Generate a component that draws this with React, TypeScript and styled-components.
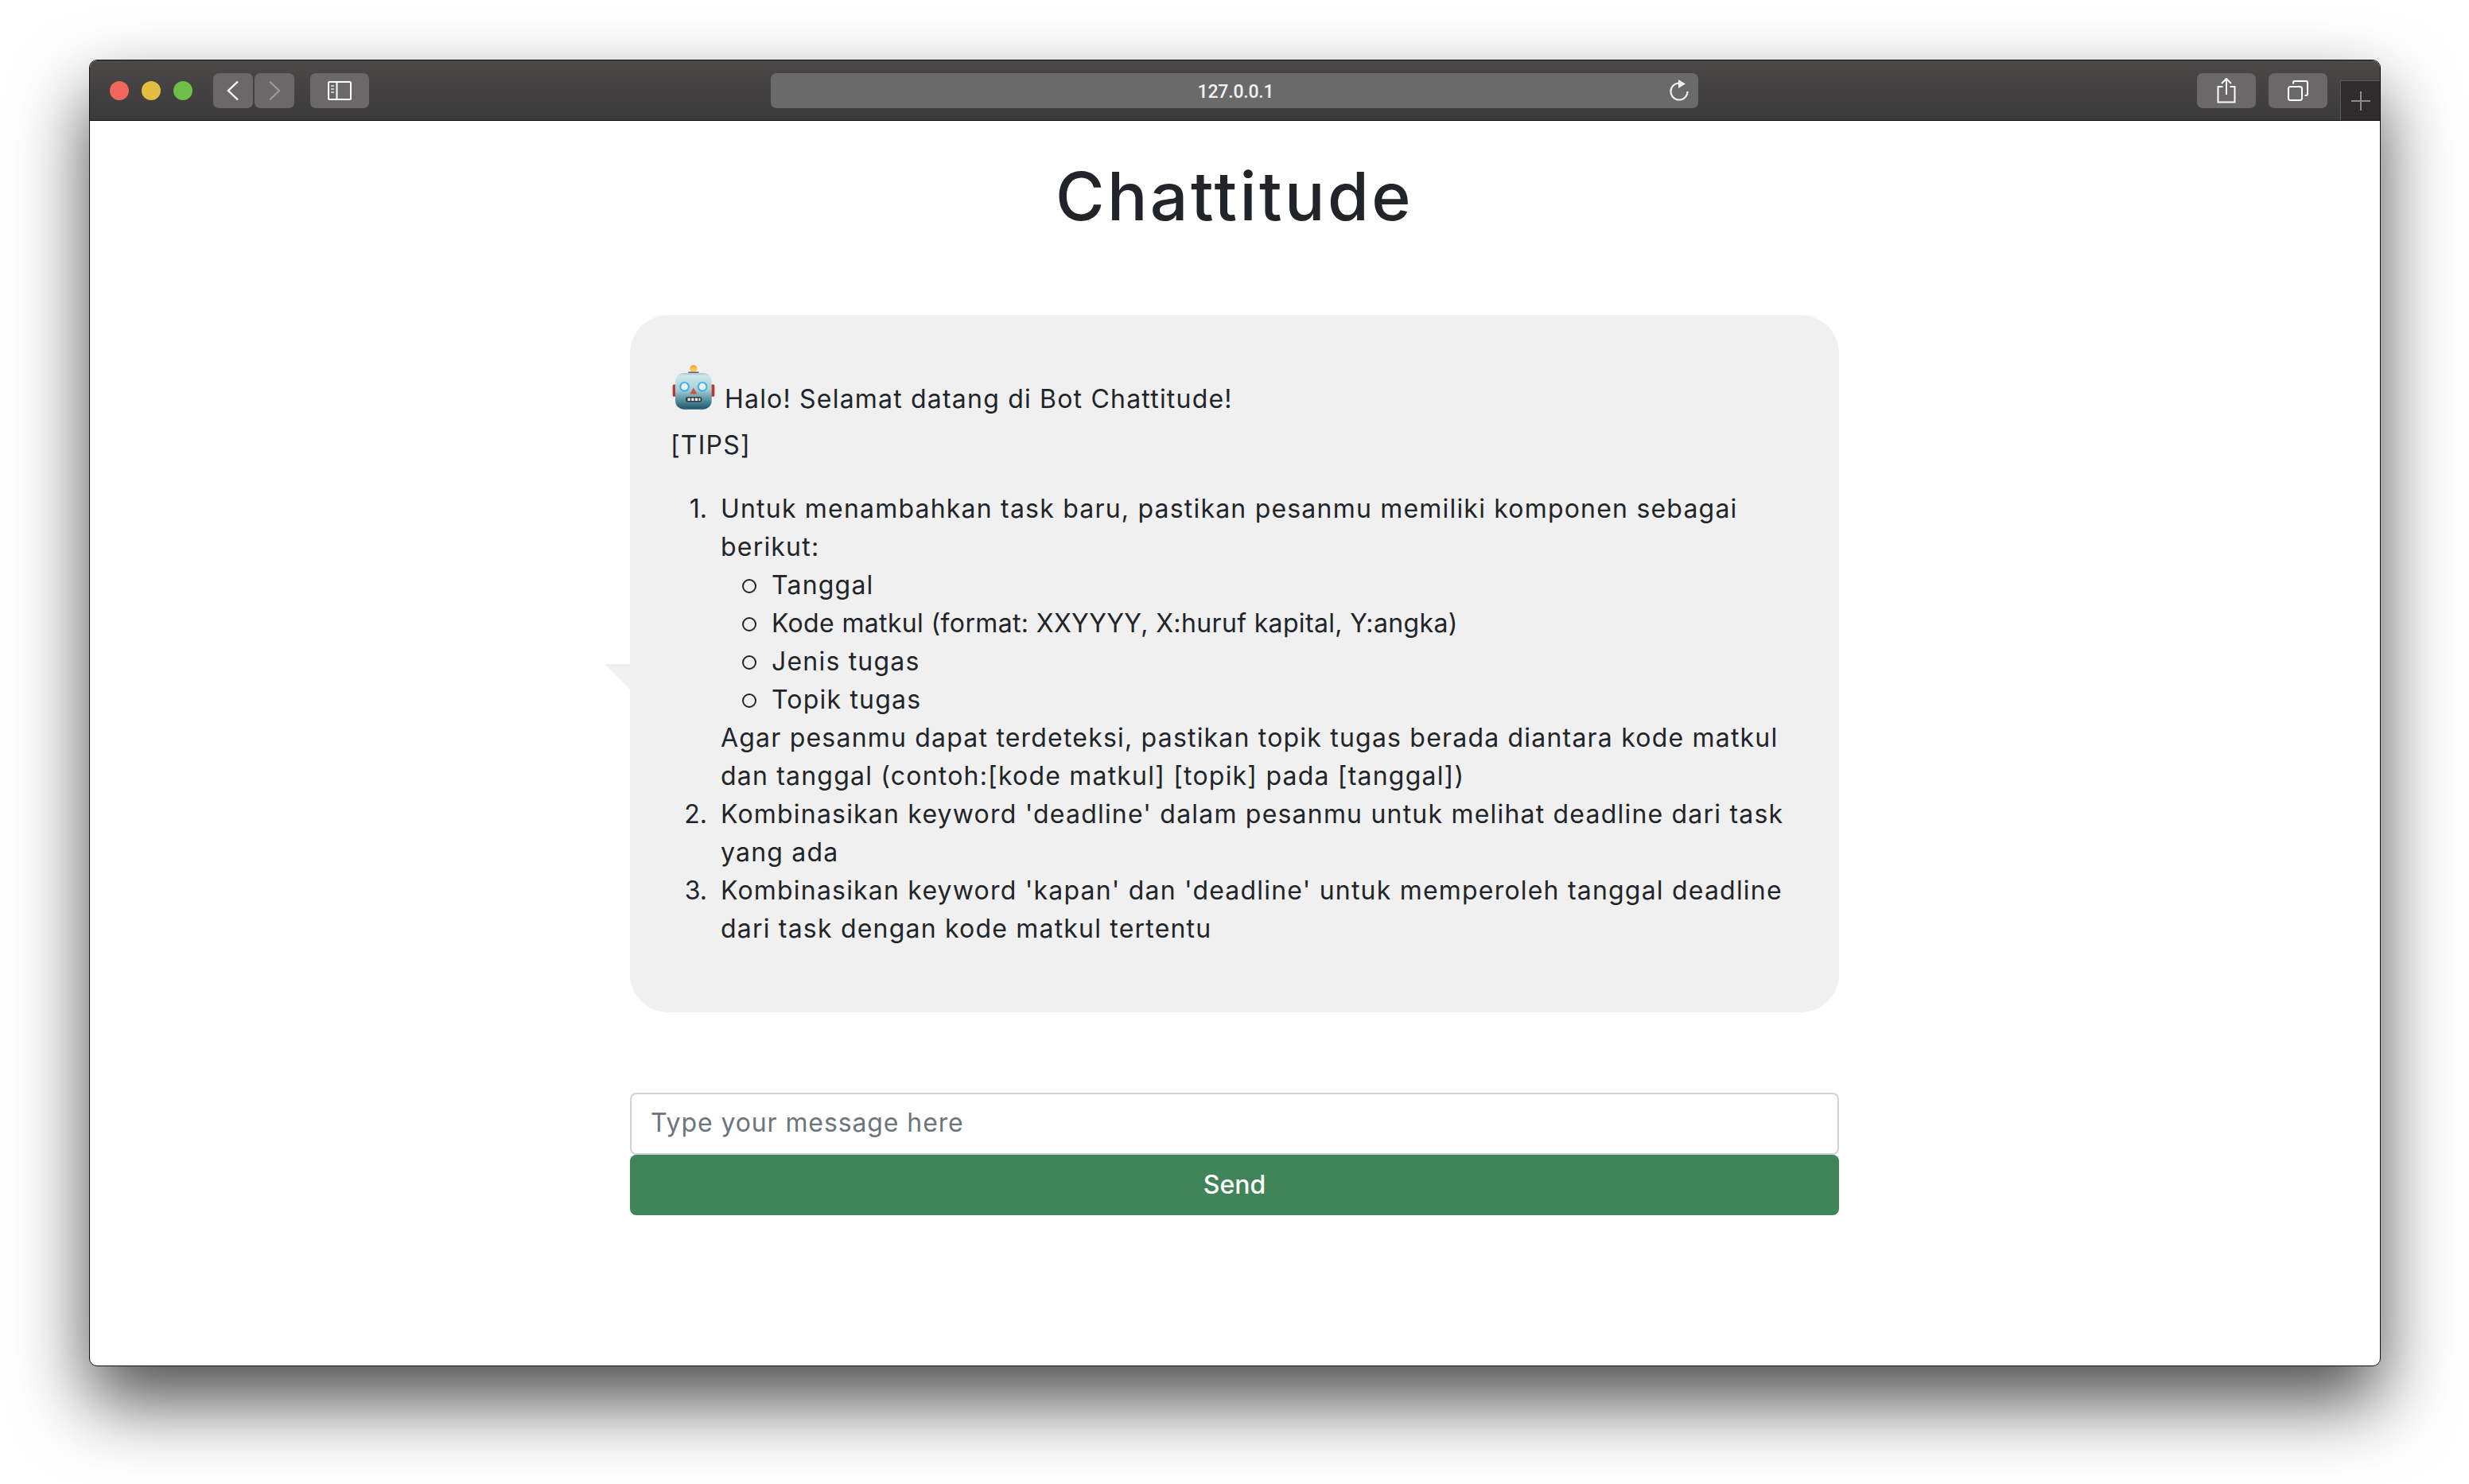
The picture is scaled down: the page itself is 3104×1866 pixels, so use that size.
import React from "react";
import styled, { createGlobalStyle } from "styled-components";

const GlobalStyle = createGlobalStyle`
  * { box-sizing: border-box; }
  html, body { margin: 0; padding: 0; background: #fff; }
  body { font-family: Inter, "Noto Sans", sans-serif; color: #212529; }
`;

const Stage = styled.div`
  width: 3104px;
  height: 1866px;
  padding: 75px 111px 148px 112px;
  overflow: hidden;
`;

const BrowserWindow = styled.div`
  height: 100%;
  display: flex;
  flex-direction: column;
  border: 1px solid #111;
  border-radius: 10px;
  background: #fff;
  box-shadow: 0 44px 92px 0 rgba(0, 0, 0, 0.7);
  overflow: hidden;
`;

const Toolbar = styled.header`
  flex: none;
  height: 76px;
  display: flex;
  align-items: flex-start;
  padding: 16px 0 0 25px;
  background: linear-gradient(#4b4948, #3b3a3a);
  border-bottom: 1px solid #111;
`;

const Lights = styled.div`
  display: flex;
  gap: 16px;
  margin-top: 10px;
  margin-right: 26px;
`;

const Light = styled.span<{ $color: string }>`
  width: 24px;
  height: 24px;
  border-radius: 50%;
  background: ${(p) => p.$color};
`;

const ToolGroup = styled.div`
  display: flex;
  gap: 2px;
`;

const ToolButton = styled.button<{ $wide?: boolean; $gap?: number }>`
  width: ${(p) => (p.$wide ? 74 : 50)}px;
  height: 44px;
  margin: 0 0 0 ${(p) => p.$gap ?? 0}px;
  padding: 0;
  display: flex;
  align-items: center;
  justify-content: center;
  border: none;
  border-radius: 7px;
  background: #6a6869;
`;

const AddressBar = styled.div`
  width: 1166px;
  height: 44px;
  margin-left: 505px;
  position: relative;
  display: flex;
  align-items: center;
  justify-content: center;
  padding: 2px 0 0 3px;
  border-radius: 7px;
  background: #6b6a6a;
  color: #f2f2f2;
  font-family: Roboto, sans-serif;
  font-size: 23px;
  font-weight: 500;
  letter-spacing: -0.2px;
`;

const Reload = styled.svg`
  position: absolute;
  right: 11px;
  top: 8px;
`;

const RightTools = styled.div`
  margin-left: auto;
  display: flex;
  gap: 16px;
`;

const NewTab = styled.div`
  align-self: flex-end;
  width: 50px;
  height: 50px;
  margin-left: 16px;
  display: flex;
  align-items: center;
  justify-content: center;
  background: #2e2c2c;
  border-top: 1px solid #5a5858;
  border-left: 1px solid #5a5858;
`;

const Page = styled.main`
  flex: 1;
  display: flex;
  flex-direction: column;
  align-items: center;
  padding-right: 1px;
`;

const Title = styled.h1`
  margin: 45px 0 98px;
  font-size: 84px;
  line-height: 1.2;
  font-weight: 500;
  letter-spacing: 3.4px;
  color: #212529;
`;

const Chat = styled.section`
  width: 1520px;
`;

const Bubble = styled.div`
  position: relative;
  padding: 63px 51px 49px;
  background: #f0f0f0;
  border-radius: 48px;
  font-size: 32px;
  line-height: 48px;
  letter-spacing: 1.2px;

  &::before {
    content: "";
    position: absolute;
    left: -32px;
    top: 439px;
    border-top: 32px solid #f0f0f0;
    border-left: 32px solid transparent;
  }
`;

const Greeting = styled.div`
  display: flex;
  align-items: flex-start;
  gap: 12px;
  height: 77px;
  padding-left: 2px;
`;

const GreetingText = styled.span`
  margin-top: 19px;
`;

const Tips = styled.div`
  margin-bottom: 32px;
`;

const Steps = styled.ol`
  margin: 0 0 32px;
  padding-left: 63px;
  list-style: none;
  counter-reset: step;
`;

const Step = styled.li`
  position: relative;
  counter-increment: step;

  &::before {
    content: counter(step) ".";
    position: absolute;
    right: 100%;
    margin-right: 17px;
    letter-spacing: 0;
  }
`;

const Parts = styled.ul`
  margin: 0;
  padding-left: 64px;
  list-style: none;
`;

const Part = styled.li<{ $tight?: boolean }>`
  position: relative;
  letter-spacing: ${(p) => (p.$tight ? 0.35 : 1.2)}px;

  &::before {
    content: "";
    position: absolute;
    left: -37px;
    top: 16px;
    width: 14px;
    height: 14px;
    border: 2px solid #212529;
    border-radius: 50%;
  }
`;

const Composer = styled.form`
  margin-top: 101px;
  display: flex;
  flex-direction: column;
`;

const MessageInput = styled.input`
  width: 100%;
  height: 78px;
  padding: 0 24px 2px;
  border: 2px solid #ced4da;
  border-radius: 8px;
  font: inherit;
  font-size: 32px;
  letter-spacing: 0.9px;
  color: #212529;

  &::placeholder {
    color: #6c757d;
    opacity: 1;
  }
`;

const SendButton = styled.button`
  height: 76px;
  padding-bottom: 2px;
  border: none;
  border-radius: 8px;
  background: #408558;
  color: #fff;
  font: inherit;
  font-size: 32px;
  font-weight: 500;
`;

const RobotEmoji = () => (
  <svg width="54" height="57" viewBox="195 208 163 172">
    <defs>
      <linearGradient id="head" x1="0" y1="0" x2="0" y2="1">
        <stop offset="0" stopColor="#aec6c6" />
        <stop offset="0.08" stopColor="#cde8ec" />
        <stop offset="0.45" stopColor="#a9cfd6" />
        <stop offset="0.72" stopColor="#5d96a4" />
        <stop offset="1" stopColor="#1d566a" />
      </linearGradient>
      <linearGradient id="bulb" x1="0" y1="0" x2="0" y2="1">
        <stop offset="0" stopColor="#f9a32b" />
        <stop offset="1" stopColor="#ffd27a" />
      </linearGradient>
    </defs>
    <rect x="197" y="282" width="16" height="46" rx="5" fill="#b8392f" />
    <rect x="340" y="282" width="16" height="46" rx="5" fill="#b8392f" />
    <circle cx="276" cy="222" r="14" fill="url(#bulb)" />
    <path d="M256 234 h40 c0 10 -8 15 -20 15 s-20 -5 -20 -15z" fill="#66547f" />
    <rect x="207" y="238" width="138" height="138" rx="32" fill="url(#head)" />
    <circle cx="242" cy="290" r="16" fill="#e6f1f4" stroke="#3fb0e6" strokeWidth="6" />
    <circle cx="310" cy="290" r="16" fill="#e6f1f4" stroke="#3fb0e6" strokeWidth="6" />
    <path d="M276 294 L262 318 H290Z" fill="#c85450" />
    <rect x="246" y="329" width="62" height="19" rx="9.5" fill="#2f3a40" />
    <path d="M254 333 h10 v11 h-10z M268 333 h10 v11 h-10z M282 333 h10 v11 h-10z M296 333 h6 v11 h-6z" fill="#e4e8e8" />
  </svg>
);

export default function App() {
  return (
    <Stage>
      <GlobalStyle />
      <BrowserWindow>
        <Toolbar>
          <Lights>
            <Light $color="#f2675c" />
            <Light $color="#e4bd45" />
            <Light $color="#6fbf46" />
          </Lights>
          <ToolGroup>
            <ToolButton aria-label="Back">
              <svg width="18" height="26" viewBox="0 0 18 26" fill="none" stroke="#fff" strokeWidth="2.4">
                <path d="M15 1.5 3 13l12 11.5" />
              </svg>
            </ToolButton>
            <ToolButton aria-label="Forward">
              <svg width="18" height="26" viewBox="0 0 18 26" fill="none" stroke="#989697" strokeWidth="2.4">
                <path d="M3 1.5 15 13 3 24.5" />
              </svg>
            </ToolButton>
          </ToolGroup>
          <ToolButton $wide $gap={20} aria-label="Sidebar">
            <svg width="30" height="24" viewBox="0 0 30 24" fill="none" stroke="#fff" strokeWidth="2">
              <rect x="1" y="1" width="28" height="22" rx="1.5" />
              <path d="M11.5 1v22" />
              <path d="M4 6h4M4 10h4M4 14h4" stroke="#c9c8c8" strokeWidth="2" />
            </svg>
          </ToolButton>
          <AddressBar>
            127.0.0.1
            <Reload width="26" height="28" viewBox="0 0 26 28" fill="none">
              <path d="M13 4.5A10.5 10.5 0 1 0 23.5 15" stroke="#eee" strokeWidth="2.2" />
              <path d="M12 0l9 5.5-9 5.5z" fill="#eee" />
            </Reload>
          </AddressBar>
          <RightTools>
            <ToolButton $wide aria-label="Share">
              <svg width="24" height="32" viewBox="0 0 24 32" fill="none" stroke="#fff" strokeWidth="2">
                <path d="M7.5 11H1.5v19.5h21V11h-6" />
                <path d="M12 21V1.5M6 7l6-6 6 6" />
              </svg>
            </ToolButton>
            <ToolButton $wide aria-label="Tabs">
              <svg width="26" height="26" viewBox="0 0 26 26" fill="none" stroke="#fff" strokeWidth="2">
                <rect x="1" y="8" width="17" height="17" rx="2.5" />
                <path d="M7 4.5V3a2 2 0 0 1 2-2h14a2 2 0 0 1 2 2v14a2 2 0 0 1-2 2h-1.5" />
              </svg>
            </ToolButton>
          </RightTools>
          <NewTab>
            <svg width="24" height="24" viewBox="0 0 24 24" stroke="#8c8a8a" strokeWidth="2">
              <path d="M12 0v24M0 12h24" />
            </svg>
          </NewTab>
        </Toolbar>
        <Page>
          <Title>Chattitude</Title>
          <Chat>
            <Bubble>
              <Greeting>
                <RobotEmoji />
                <GreetingText>Halo! Selamat datang di Bot Chattitude!</GreetingText>
              </Greeting>
              <Tips>[TIPS]</Tips>
              <Steps>
                <Step>
                  Untuk menambahkan task baru, pastikan pesanmu memiliki komponen sebagai berikut:
                  <Parts>
                    <Part>Tanggal</Part>
                    <Part $tight>Kode matkul (format: XXYYYY, X:huruf kapital, Y:angka)</Part>
                    <Part>Jenis tugas</Part>
                    <Part>Topik tugas</Part>
                  </Parts>
                  Agar pesanmu dapat terdeteksi, pastikan topik tugas berada diantara kode matkul dan tanggal (contoh:[kode matkul] [topik] pada [tanggal])
                </Step>
                <Step>Kombinasikan keyword 'deadline' dalam pesanmu untuk melihat deadline dari task yang ada</Step>
                <Step>Kombinasikan keyword 'kapan' dan 'deadline' untuk memperoleh tanggal deadline dari task dengan kode matkul tertentu</Step>
              </Steps>
            </Bubble>
            <Composer>
              <MessageInput placeholder="Type your message here" />
              <SendButton type="button">Send</SendButton>
            </Composer>
          </Chat>
        </Page>
      </BrowserWindow>
    </Stage>
  );
}
